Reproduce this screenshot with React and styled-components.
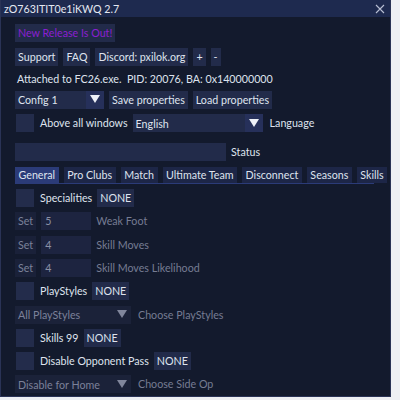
import styled, { createGlobalStyle } from 'styled-components';

const Global = createGlobalStyle`
  html, body {
    margin: 0;
    padding: 0;
    background: #eef0f4;
  }
  body {
    font-family: Lato, "Noto Sans", sans-serif;
    font-size: 10.7px;
    color: #dfe3ee;
  }
`;

const Window = styled.div`
  width: 391px;
  height: 397px;
  background: #131a2d;
  border: 1px solid #2a3356;
  border-top: none;
  box-sizing: border-box;
  display: flex;
  flex-direction: column;
  overflow: hidden;
`;

const TitleBar = styled.div`
  height: 17px;
  background: #1e2a4f;
  display: flex;
  align-items: center;
  justify-content: space-between;
  padding: 0 5px 0 3px;
  flex-shrink: 0;
`;

const Title = styled.span`
  color: #e4e8f2;
  line-height: 17px;
`;

const Content = styled.div`
  padding: 7px 8px 0 14px;
  display: flex;
  flex-direction: column;
  gap: 5.3px;
`;

const Row = styled.div`
  display: flex;
  align-items: center;
  gap: ${(p) => p.$gap ?? 5}px;
  height: ${(p) => p.$h ?? 18}px;
  margin-top: ${(p) => p.$mt ?? 0}px;
`;

const Button = styled.div`
  height: 18px;
  line-height: 18px;
  padding: 0 3px;
  background: ${(p) => (p.$dim ? '#1a2139' : '#222b4a')};
  color: ${(p) => p.$color ?? (p.$dim ? '#7b8199' : '#dfe3ee')};
  white-space: nowrap;
`;

const Label = styled.span`
  color: ${(p) => (p.$dim ? '#767c93' : '#dfe3ee')};
  white-space: nowrap;
  line-height: 18px;
`;

const Check = styled.div`
  width: 18px;
  height: 18px;
  background: #232c4b;
  margin-left: 1px;
  margin-right: 1px;
  flex-shrink: 0;
`;

const Combo = styled.div`
  width: ${(p) => p.$w}px;
  height: 18px;
  background: ${(p) => (p.$dim ? '#1b2239' : '#222b4a')};
  display: flex;
  align-items: center;
  justify-content: space-between;
  padding-left: 3px;
  box-sizing: border-box;
  color: ${(p) => (p.$dim ? '#7b8199' : '#dfe3ee')};
  white-space: nowrap;
  flex-shrink: 0;
`;

const Arrow = styled.div`
  width: 18px;
  height: 18px;
  display: flex;
  align-items: center;
  justify-content: center;
  background: ${(p) => (p.$dim ? '#1b2239' : '#26305a')};
`;

const Input = styled.div`
  width: ${(p) => p.$w}px;
  height: 18px;
  line-height: 18px;
  background: ${(p) => (p.$dim ? '#1d2440' : '#222b4a')};
  padding-left: 4px;
  box-sizing: border-box;
  color: ${(p) => (p.$dim ? '#8a90a6' : '#dfe3ee')};
  flex-shrink: 0;
`;

const TabBar = styled.div`
  display: flex;
  gap: 5px;
  height: 16px;
  border-bottom: 1px solid #2b3b78;
  margin-right: 8px;
`;

const Tab = styled.div`
  padding: 0 3.5px;
  height: 16px;
  line-height: 16px;
  background: ${(p) => (p.$active ? '#2b3b78' : '#1d2647')};
  white-space: nowrap;
`;

function Triangle({ dim }) {
  return (
    <svg width="10" height="9" viewBox="0 0 10 9">
      <path d="M0 0 L10 0 L5 8 Z" fill={dim ? '#80869c' : '#eef1f8'} />
    </svg>
  );
}

function Close() {
  return (
    <svg width="10" height="10" viewBox="0 0 10 10">
      <path d="M1 1 L9 9 M9 1 L1 9" stroke="#b8bfd4" strokeWidth="1.1" />
    </svg>
  );
}

export default function App() {
  return (
    <>
      <Global />
      <Window>
        <TitleBar>
          <Title>zO763ITIT0e1iKWQ 2.7</Title>
          <Close />
        </TitleBar>
        <Content>
          <Row>
            <Button $color="#8c1fd0">New Release Is Out!</Button>
          </Row>
          <Row $mt={1}>
            <Button>Support</Button>
            <Button>FAQ</Button>
            <Button>Discord: pxilok.org</Button>
            <Button>+</Button>
            <Button>-</Button>
          </Row>
          <Row $h={14}>
            <Label style={{ marginLeft: 2 }}>Attached to FC26.exe.&nbsp; PID: 20076, BA: 0x140000000</Label>
          </Row>
          <Row>
            <Combo $w={89}>
              Config 1
              <Arrow><Triangle /></Arrow>
            </Combo>
            <Button>Save properties</Button>
            <Button>Load properties</Button>
          </Row>
          <Row>
            <Check />
            <Label>Above all windows</Label>
            <Combo $w={130}>
              English
              <Arrow><Triangle /></Arrow>
            </Combo>
            <Label style={{ marginLeft: 2 }}>Language</Label>
          </Row>
          <Row $mt={6}>
            <Input $w={211} />
            <Label>Status</Label>
          </Row>
          <TabBar>
            <Tab $active>General</Tab>
            <Tab>Pro Clubs</Tab>
            <Tab>Match</Tab>
            <Tab>Ultimate Team</Tab>
            <Tab>Disconnect</Tab>
            <Tab>Seasons</Tab>
            <Tab>Skills</Tab>
          </TabBar>
          <Row>
            <Check />
            <Label>Specialities</Label>
            <Button>NONE</Button>
          </Row>
          <Row>
            <Button $dim>Set</Button>
            <Input $w={50} $dim>5</Input>
            <Label $dim>Weak Foot</Label>
          </Row>
          <Row>
            <Button $dim>Set</Button>
            <Input $w={50} $dim>4</Input>
            <Label $dim>Skill Moves</Label>
          </Row>
          <Row>
            <Button $dim>Set</Button>
            <Input $w={50} $dim>4</Input>
            <Label $dim>Skill Moves Likelihood</Label>
          </Row>
          <Row>
            <Check />
            <Label>PlayStyles</Label>
            <Button>NONE</Button>
          </Row>
          <Row>
            <Combo $w={116} $dim>
              All PlayStyles
              <Arrow $dim><Triangle dim /></Arrow>
            </Combo>
            <Label $dim style={{ marginLeft: 2 }}>Choose PlayStyles</Label>
          </Row>
          <Row>
            <Check />
            <Label>Skills 99</Label>
            <Button>NONE</Button>
          </Row>
          <Row>
            <Check />
            <Label>Disable Opponent Pass</Label>
            <Button>NONE</Button>
          </Row>
          <Row>
            <Combo $w={116} $dim>
              Disable for Home
              <Arrow $dim><Triangle dim /></Arrow>
            </Combo>
            <Label $dim style={{ marginLeft: 2 }}>Choose Side Op</Label>
          </Row>
        </Content>
      </Window>
    </>
  );
}
